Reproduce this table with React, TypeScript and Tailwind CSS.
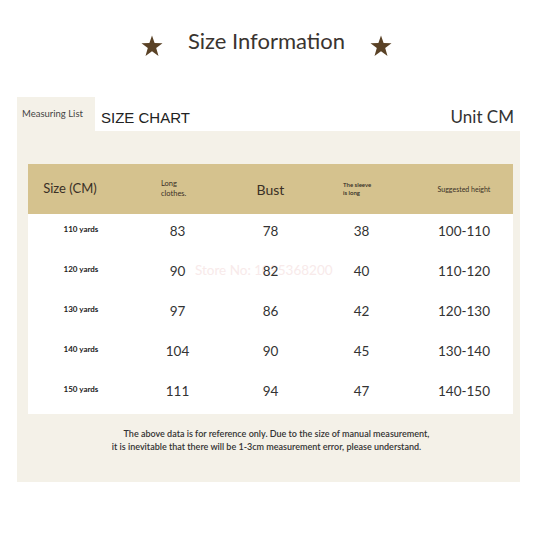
const rows = [
  ["110 yards", "83", "78", "38", "100-110"],
  ["120 yards", "90", "82", "40", "110-120"],
  ["130 yards", "97", "86", "42", "120-130"],
  ["140 yards", "104", "90", "45", "130-140"],
  ["150 yards", "111", "94", "47", "140-150"],
];

function Star() {
  return (
    <svg width="24" height="24" viewBox="0 0 24 24">
      <polygon
        points="12,1.5 14.6,9 22.5,9.2 16.2,14 18.5,22 12,17.2 5.5,22 7.8,14 1.5,9.2 9.4,9"
        fill="#5a4226"
      />
    </svg>
  );
}

function App() {
  return (
    <div className="w-[533px] h-[533px] bg-white font-['Lato','Noto_Sans',sans-serif] text-[#333]">
      <div className="flex justify-center items-center pt-[30px] h-[58px]">
        <div className="pt-[3px]">
          <Star />
        </div>
        <div className="mx-[24px] text-[22px] text-[#3a3430] leading-none pb-[6px]">
          Size Information
        </div>
        <div className="pt-[3px]">
          <Star />
        </div>
      </div>

      <div className="ml-[17px] mr-[13px] mt-[39px]">
        <div className="flex items-end h-[34px]">
          <div className="w-[78px] h-full bg-[#f4f1e8] pt-[10px] pl-[5px] text-[9.5px] text-[#444]">
            Measuring List
          </div>
          <div className="pl-[6px] pb-[2px] text-[15px] text-[#222] font-['Liberation_Sans',sans-serif]">
            SIZE CHART
          </div>
          <div className="flex-1 text-right pr-[6px] pb-[2px] text-[17px] text-[#333]">
            Unit CM
          </div>
        </div>

        <div className="bg-[#f4f1e8] h-[351px] pt-[33px] pl-[11px] pr-[7px]">
          <div className="relative bg-white">
            {/* faint shop watermark, sits under the numbers */}
            <div className="absolute left-[167px] top-[96px] text-[13.5px] text-[#f8eaea]">
              Store No: 1095368200
            </div>
            <div className="relative grid grid-cols-[102px_95px_91px_99px_98px] h-[50px] items-center bg-[#d5c28e] text-[#3a3026]">
              <div className="text-center pr-[18px] text-[13px]">Size (CM)</div>
              <div className="pl-[31px] text-[7.5px] leading-[10px]">
                Long
                <br />
                clothes.
              </div>
              <div className="text-center text-[14px]">Bust</div>
              <div className="pl-[27px] text-[6px] leading-[8px] font-semibold text-[#2e2820]">
                The sleeve
                <br />
                is long
              </div>
              <div className="text-center text-[7px]">Suggested height</div>
            </div>
            {rows.map((r) => (
              <div
                key={r[0]}
                className="relative grid grid-cols-[102px_95px_91px_99px_98px] h-[40px] items-start"
              >
                <div className="text-center pl-[4px] pt-[9px] text-[8px] font-bold text-[#222]">
                  {r[0]}
                </div>
                <div className="text-center pt-[7px] text-[13.5px]">{r[1]}</div>
                <div className="text-center pt-[7px] text-[13.5px]">{r[2]}</div>
                <div className="text-center pr-[8px] pt-[7px] text-[13.5px]">{r[3]}</div>
                <div className="text-center pt-[7px] text-[13.5px]">{r[4]}</div>
              </div>
            ))}
          </div>
          <div className="pt-[13px] text-center text-[9px] leading-[13px] font-semibold text-[#333]">
            <div className="pl-[12px]">
              The above data is for reference only. Due to the size of manual measurement,
            </div>
            <div className="pr-[8px]">
              it is inevitable that there will be 1-3cm measurement error, please understand.
            </div>
          </div>
        </div>
      </div>
    </div>
  );
}

export default App;
